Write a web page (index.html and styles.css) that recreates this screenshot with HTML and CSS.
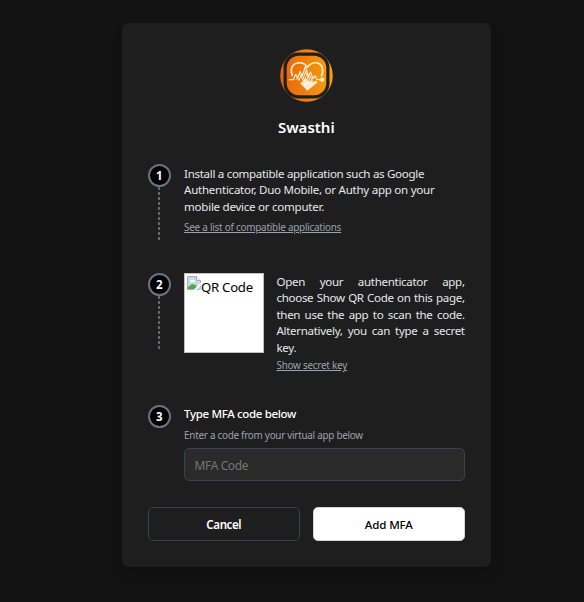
FILE: index.html
```html
<!DOCTYPE html>
<html lang="en">
<head>
<meta charset="utf-8">
<title>Swasthi</title>
<link rel="stylesheet" href="styles.css">
</head>
<body>
<main class="card">
  <header class="brand">
    <svg class="logo" viewBox="0 0 54 54" aria-hidden="true">
      <defs><linearGradient id="g" gradientUnits="userSpaceOnUse" x1="1" y1="27" x2="53" y2="27"><stop offset="0" stop-color="#e8640c"/><stop offset="1" stop-color="#f5a00c"/></linearGradient></defs>
      <circle cx="27" cy="27" r="26.8" fill="url(#g)"/>
      <rect x="3.6" y="3.6" width="46.8" height="46.8" rx="15.5" fill="#1e1e1e"/>
      <rect x="6.8" y="6.8" width="40.4" height="40.4" rx="12.5" fill="url(#g)"/>
      <g fill="none" stroke="#ffedd5" stroke-linecap="round" stroke-linejoin="round">
        <path d="M12.5 27C9.500 18 14.500 14 20 14C24 14 26.500 16 28 18.500C30 15.500 33 14 36.500 14C42.500 14 45 20.500 42.300 27.500" stroke-width="1.7"/>
        <path d="M9.500 31.300h4l2.500-5.500 2 4 2.500-7 2 5 3.500-10 3 11 2-5.500 2.500 7 2-3 2.500 4h5.500" stroke-width="1.3"/>
        <path d="M16.500 31l1.500-2 1.500 3 2-5.500 1.700 5.500 2.800-9 3 10 2-5 2 5" stroke-width="1"/>
      </g>
      <path d="M20.500 35l3-2.500 2.500-4 3 5 2.500-2 2 2.500 2.500-2 2.500 1.500L28 42.500z" fill="#ffedd5"/>
      <circle cx="43" cy="31.300" r="2.200" fill="#ffedd5"/>
    </svg>
    <h1 class="title">Swasthi</h1>
  </header>

  <section class="step step-install">
    <div class="rail"><span class="num">1</span><span class="dash"></span></div>
    <div class="body">
      <p class="copy">Install a compatible application such as Google<br><span class="wide">Authenticator, Duo Mobile, or Authy app on your</span><br><span class="wide">mobile device or computer.</span></p>
      <a class="link">See a list of compatible applications</a>
    </div>
  </section>

  <section class="step step-scan">
    <div class="rail"><span class="num">2</span><span class="dash"></span></div>
    <div class="body scan">
      <div class="qr">
        <svg class="broken" viewBox="0 0 14 14" aria-hidden="true">
          <path d="M.5.5h9l4 4v9H.5z" fill="#c6d9f5" stroke="#a9adb3"/>
          <path d="M3 6a1.500 1.500 0 0 1 2-2 2 2 0 0 1 3 2z" fill="#fff"/>
          <path d="M1 13V11l4-3 4 1 1 4z" fill="#4fae35"/>
          <path d="M9.500.5v4h4" fill="#fff" stroke="#a9adb3"/>
          <path d="M14 6.500L6.500 14H9l5-5z" fill="#fff"/><path d="M10 14l4-4v4z" fill="#b7cdea"/>
        </svg><span class="alt">QR Code</span>
      </div>
      <div class="scan-copy">
        <p class="copy justified">Open your authenticator app,<br>choose Show QR Code on this page,<br>then use the app to scan the code.<br>Alternatively, you can type a secret</p>
        <p class="copy">key.</p>
        <a class="link secret">Show secret key</a>
      </div>
    </div>
  </section>

  <section class="step step-code">
    <div class="rail"><span class="num">3</span></div>
    <div class="body">
      <h2 class="label">Type MFA code below</h2>
      <p class="hint">Enter a code from your virtual app below</p>
      <input class="field" type="text" placeholder="MFA Code">
    </div>
  </section>

  <div class="actions">
    <button class="btn cancel"><span>Cancel</span></button>
    <button class="btn add"><span>Add MFA</span></button>
  </div>
</main>
</body>
</html>
```
FILE: styles.css
```css
* { box-sizing: border-box; }
body {
  margin: 0;
  height: 602px;
  overflow: hidden;
  padding: 22.5px 0 0 121.5px;
  background: #121212;
  font-family: "Noto Sans", "Open Sans", sans-serif;
  color: #e5e7eb;
}
h1, h2, p { margin: 0; }
.card {
  width: 369.6px;
  height: 544.5px;
  padding: 26.4px;
  border-radius: 6.6px;
  background: #1e1e1e;
  box-shadow: 0 8px 12px -2px rgba(0,0,0,.18);
}
.brand { height: 115.3px; display: flex; flex-direction: column; align-items: center; }
.logo { width: 53px; height: 53px; display: block; }
.title { margin-top: 13.7px; font-size: 15px; line-height: 23px; font-weight: 600; color: #fff; }
.step { display: flex; }
.step-install { height: 109px; }
.step-scan { height: 132px; }
.step-code { height: 102px; }
.rail { width: 23px; margin-right: 13.2px; display: flex; flex-direction: column; align-items: center; }
.num {
  width: 23px; height: 23px; flex: none;
  border: 2px solid #6b7280; border-radius: 50%;
  background: #000; color: #fff;
  font-size: 11.5px; line-height: 19.5px; font-weight: 700; text-align: center;
}
.dash {
  width: 2px; height: 53px;
  background: repeating-linear-gradient(#626873 0 3.2px, transparent 3.2px 5px);
}
.body { flex: 1; min-width: 0; padding-top: 1.4px; }
.copy { font-size: 11.55px; line-height: 16.5px; letter-spacing: -.31px; white-space: nowrap; }
.wide { letter-spacing: -.26px; }
.link {
  display: block; width: max-content; margin-top: 5.6px;
  font-size: 9.9px; line-height: 13.2px; letter-spacing: -.23px;
  color: #9ca3af; text-decoration: underline;
}
.link.secret { margin-top: 3px; }
.scan { display: flex; padding-top: 0; }
.qr {
  width: 80px; height: 80px; flex: none; margin-right: 12.4px;
  display: flex; align-items: flex-start; padding: 2px 0 0 2px;
  background: #fff; border: 1px solid #c0c0c0; color: #000;
}
.broken { width: 14px; height: 14px; flex: none; }
.alt { padding-top: 1px; font-size: 13.2px; line-height: 20px; letter-spacing: -.3px; white-space: nowrap; }
.scan-copy { flex: 1; min-width: 0; padding-top: .8px; }
.justified { text-align: justify; text-align-last: justify; }
.step-code .body { padding-top: .8px; }
.label { font-size: 11.55px; line-height: 16.5px; font-weight: 500; letter-spacing: -.36px; color: #fff; }
.hint { margin-top: 6.5px; font-size: 9.9px; line-height: 13.2px; letter-spacing: -.26px; color: #9ca3af; }
.field {
  display: block; width: 100%; height: 33px; margin-top: 6.3px; padding: 1px 9.5px 0;
  border: 1px solid #374151; border-radius: 5px; background: #2a2a2a;
  font: 12px "Noto Sans", sans-serif; letter-spacing: -.4px; color: #fff;
}
.field::placeholder { color: #757575; opacity: 1; }
.actions { display: flex; gap: 13.2px; }
.btn {
  flex: 1; height: 33.5px; padding: 1px 0 0; border-radius: 5px;
  font: 600 11.55px "Noto Sans", sans-serif; letter-spacing: -.4px;
}
.cancel { border: 1px solid #374151; background: #1e1e1e; color: #fff; }
.add { border: 1px solid #d1d5db; background: #fff; color: #000; font-weight: 500; letter-spacing: -.15px; }
```
